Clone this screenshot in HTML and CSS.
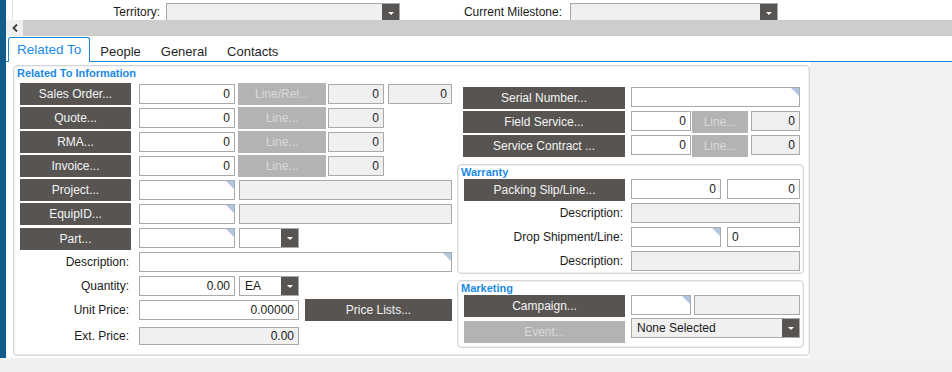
FILE: index.html
```html
<!DOCTYPE html>
<html>
<head>
<meta charset="utf-8">
<link rel="stylesheet" href="styles.css">
</head>
<body>
<div class="app">
  <div class="rail"></div>
  <div class="main">
    <div class="topform">
      <div class="toprow">
        <span class="toplabel lbl-territory">Territory:</span>
        <div class="select gray sel-territory"><span class="sel-val"></span><span class="arrow"></span></div>
        <span class="toplabel lbl-milestone">Current Milestone:</span>
        <div class="select gray sel-milestone"><span class="sel-val"></span><span class="arrow"></span></div>
      </div>
    </div>
    <div class="hscroll">
      <div class="scroll-btn"><svg width="6" height="8" viewBox="0 0 6 8"><polyline points="5,0.5 1.5,4 5,7.5" fill="none" stroke="#3a3a3a" stroke-width="1.8"/></svg></div>
      <div class="scroll-track"></div>
    </div>
    <div class="tabs">
      <div class="tab active">Related To</div>
      <div class="tab">People</div>
      <div class="tab">General</div>
      <div class="tab">Contacts</div>
    </div>
    <div class="content">
      <div class="panel-wrap">
        <div class="panel">
          <div class="col-left">
            <div class="legend">Related To Information</div>
            <div class="rows">
              <div class="row">
                <div class="btn w111">Sales Order...</div>
                <div class="field w96 ml8">0</div>
                <div class="btn off w88 ml3">Line/Rel...</div>
                <div class="field ro w56 ml2">0</div>
                <div class="field ro w64 ml4">0</div>
              </div>
              <div class="row">
                <div class="btn w111">Quote...</div>
                <div class="field w96 ml8">0</div>
                <div class="btn off w88 ml3">Line...</div>
                <div class="field ro w56 ml2">0</div>
              </div>
              <div class="row">
                <div class="btn w111">RMA...</div>
                <div class="field w96 ml8">0</div>
                <div class="btn off w88 ml3">Line...</div>
                <div class="field ro w56 ml2">0</div>
              </div>
              <div class="row">
                <div class="btn w111">Invoice...</div>
                <div class="field w96 ml8">0</div>
                <div class="btn off w88 ml3">Line...</div>
                <div class="field ro w56 ml2">0</div>
              </div>
              <div class="row">
                <div class="btn w111">Project...</div>
                <div class="field lookup w96 ml8"></div>
                <div class="field ro w213 ml4"></div>
              </div>
              <div class="row">
                <div class="btn w111">EquipID...</div>
                <div class="field lookup w96 ml8"></div>
                <div class="field ro w213 ml4"></div>
              </div>
              <div class="row">
                <div class="btn w111 part-btn">Part...</div>
                <div class="field lookup w96 ml8"></div>
                <div class="select w60 ml4"><span class="sel-val"></span><span class="arrow"></span></div>
              </div>
              <div class="row">
                <div class="lbl w111">Description:</div>
                <div class="field lookup w313 ml8"></div>
              </div>
              <div class="row">
                <div class="lbl w111">Quantity:</div>
                <div class="field w96 ml8">0.00</div>
                <div class="select w60 ml4"><span class="sel-val">EA</span><span class="arrow"></span></div>
              </div>
              <div class="row">
                <div class="lbl w111">Unit Price:</div>
                <div class="field w160 ml8">0.00000</div>
                <div class="btn w147 ml6">Price Lists...</div>
              </div>
              <div class="row row-ext">
                <div class="lbl w111">Ext. Price:</div>
                <div class="field ro short w160 ml8">0.00</div>
              </div>
            </div>
          </div>
          <div class="col-right">
            <div class="rrows">
              <div class="rrow">
                <div class="btn w162">Serial Number...</div>
                <div class="field lookup w169 ml6"></div>
              </div>
              <div class="rrow">
                <div class="btn w162">Field Service...</div>
                <div class="field w60 ml6">0</div>
                <div class="btn off w56 ml1">Line...</div>
                <div class="field ro w49 ml3">0</div>
              </div>
              <div class="rrow">
                <div class="btn w162">Service Contract ...</div>
                <div class="field w60 ml6">0</div>
                <div class="btn off w56 ml1">Line...</div>
                <div class="field ro w49 ml3">0</div>
              </div>
            </div>
            <div class="group warranty">
              <div class="legend">Warranty</div>
              <div class="grows">
                <div class="rrow">
                  <div class="btn w161">Packing Slip/Line...</div>
                  <div class="field w90 ml6">0</div>
                  <div class="field w73 ml6">0</div>
                </div>
                <div class="rrow">
                  <div class="lbl w161">Description:</div>
                  <div class="field ro w169 ml6"></div>
                </div>
                <div class="rrow">
                  <div class="lbl w161">Drop Shipment/Line:</div>
                  <div class="field lookup w90 ml6"></div>
                  <div class="field left w73 ml6">0</div>
                </div>
                <div class="rrow last">
                  <div class="lbl w161">Description:</div>
                  <div class="field ro w169 ml6"></div>
                </div>
              </div>
            </div>
            <div class="group marketing">
              <div class="legend">Marketing</div>
              <div class="grows">
                <div class="rrow">
                  <div class="btn w161">Campaign...</div>
                  <div class="field lookup w60 ml6"></div>
                  <div class="field ro w106 ml3"></div>
                </div>
                <div class="rrow event-row">
                  <div class="btn off w161">Event...</div>
                  <div class="select gray w169 ml6 none-sel"><span class="sel-val">None Selected</span><span class="arrow"></span></div>
                </div>
              </div>
            </div>
          </div>
        </div>
      </div>
      <div class="content-rest"></div>
    </div>
  </div>
</div>
</body>
</html>
```

FILE: styles.css
```css
* { box-sizing: border-box; }
body {
  margin: 0;
  background: #f0f0f0;
  font-family: "Liberation Sans", Arial, sans-serif;
  font-size: 12px;
  color: #1a1a1a;
}
.app { display: flex; height: 358px; }
.rail { width: 6px; background: #0f5b8b; flex: none; }
.main { flex: 1; display: flex; flex-direction: column; background: #fff; min-width: 0; }

.topform { height: 20px; overflow: hidden; }
.toprow {
  margin-left: 6px;
  border-left: 1px solid #e0e0e0;
  height: 20px;
  display: flex;
  align-items: flex-start;
  padding-top: 3px;
}
.toplabel { line-height: 19px; text-align: right; }
.lbl-territory { width: 147px; }
.lbl-milestone { width: 162px; }
.sel-territory { width: 234px; margin-left: 6px; }
.sel-milestone { width: 208px; margin-left: 8px; }

.hscroll { height: 16px; display: flex; }
.scroll-btn {
  width: 17px;
  background: #efefef;
  display: flex;
  align-items: center;
  justify-content: center;
}
.scroll-track { flex: 1; background: #cdcdcd; }

.tabs {
  height: 26px;
  display: flex;
  align-items: flex-end;
  border-bottom: 1px solid #1e87d4;
  padding-left: 2px;
}
.tab {
  font-size: 13px;
  color: #1f1f1f;
  line-height: 18px;
  height: 18px;
  padding: 0 10px;
}
.tab.active {
  font-size: 13.5px;
  color: #1a8ae6;
  border: 1px solid #1e87d4;
  border-bottom: none;
  border-radius: 3px 3px 0 0;
  background: #fff;
  height: 25px;
  line-height: 24px;
  padding: 0 8px;
  margin-bottom: -1px;
}

.content { flex: 1; display: flex; }
.panel-wrap { width: 804px; background: #fff; padding: 3px 0 0 7px; }
.content-rest { flex: 1; background: #f2f2f4; }
.panel {
  height: 291px;
  border: 1px solid #d6d6d6;
  border-radius: 4px;
  box-shadow: inset 0 0 0 1px #f0f0f0;
  display: flex;
  background: #fff;
}
.legend {
  font-size: 11px;
  font-weight: bold;
  color: #1a8ae6;
  line-height: 13px;
}
.col-left { width: 443px; padding-left: 6px; }
.col-left > .legend { margin: 1px 0 0 -3px; }
.rows { margin-top: 3px; }
.row { display: flex; align-items: center; height: 22px; margin-bottom: 2px; }
.row-ext { margin-top: 4px; }

.col-right { width: 348px; padding-top: 21px; }
.rrows { padding-left: 6px; padding-bottom: 2px; }
.rrows .rrow:last-child { margin-bottom: 0; }
.rrow { display: flex; align-items: flex-start; height: 22px; margin-bottom: 2px; }
.group {
  border: 1px solid #d6d6d6;
  border-radius: 4px;
  box-shadow: inset 0 0 0 1px #f0f0f0;
  width: 347px;
}
.group .legend { margin-left: 3px; }
.warranty { margin-top: 5px; }
.warranty .legend { margin-top: 1px; line-height: 13px; }
.rrow.last { margin-bottom: 1px; height: 21px; }
.marketing { margin-top: 6px; padding-bottom: 4px; }
.marketing .legend { line-height: 14px; }
.grows { padding-left: 6px; }
.event-row { margin-top: 4px; margin-bottom: 0; }
.none-sel { margin-top: -3px; }

.btn {
  flex: none;
  height: 22px;
  line-height: 22px;
  background: #575452;
  color: #f4f4f4;
  text-align: center;
  white-space: nowrap;
}
.btn.off { background: #b3b3b3; color: #d9d9d9; }
.part-btn { margin-top: 2px; }

.lbl {
  flex: none;
  text-align: right;
  padding-right: 2px;
  line-height: 20px;
  color: #1a1a1a;
  white-space: nowrap;
}

.field {
  flex: none;
  position: relative;
  height: 20px;
  border: 1px solid #a9a9a9;
  background: #fff;
  text-align: right;
  padding: 0 4px;
  line-height: 18px;
  color: #1a1a1a;
}
.field.ro { background: #f0f0f0; }
.field.short { height: 18px; line-height: 16px; }
.field.left { text-align: left; }
.field.lookup::after {
  content: "";
  position: absolute;
  top: 0;
  right: 0;
  border-style: solid;
  border-width: 0 8px 8px 0;
  border-color: transparent #b2c5de transparent transparent;
}

.select {
  flex: none;
  display: flex;
  height: 20px;
  border: 1px solid #a9a9a9;
  background: #fff;
}
.select.gray { background: #f0f0f0; }
.sel-val { flex: 1; padding-left: 5px; line-height: 18px; color: #1a1a1a; }
.arrow {
  width: 17px;
  background: #575452;
  display: flex;
  align-items: center;
  justify-content: center;
}
.arrow::after {
  content: "";
  border-left: 3px solid transparent;
  border-right: 3px solid transparent;
  border-top: 3px solid #fff;
}

.w49 { width: 49px; } .w56 { width: 56px; } .w60 { width: 60px; } .w64 { width: 64px; }
.w73 { width: 73px; } .w88 { width: 88px; } .w90 { width: 90px; } .w96 { width: 96px; }
.w106 { width: 106px; } .w111 { width: 111px; } .w147 { width: 147px; } .w160 { width: 160px; }
.w161 { width: 161px; } .w162 { width: 162px; } .w169 { width: 169px; } .w213 { width: 213px; }
.w313 { width: 313px; }
.ml1 { margin-left: 1px; } .ml2 { margin-left: 2px; } .ml3 { margin-left: 3px; } .ml4 { margin-left: 4px; }
.ml6 { margin-left: 6px; } .ml8 { margin-left: 8px; }
```
